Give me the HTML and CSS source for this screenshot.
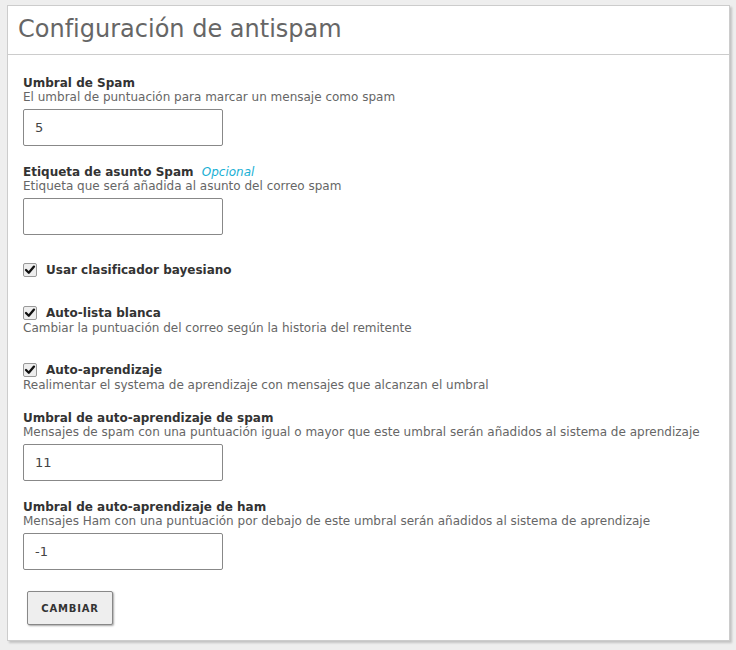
FILE: index.html
```html
<!DOCTYPE html>
<html lang="es">
  <head>
    <meta charset="UTF-8" />
    <meta name="viewport" content="width=device-width, initial-scale=1.0" />
    <title>Antispam</title>
    <link rel="stylesheet" href="styles.css">
  </head>
  <body>
    <div class="panel">
      <h1 class="panel-title">Configuración de antispam</h1>
      <form class="panel-body">
        <div class="field">
          <label class="field-label">Umbral de Spam</label>
          <div class="field-help">El umbral de puntuación para marcar un mensaje como spam</div>
          <input class="field-input" type="text" value="5">
        </div>
        <div class="field">
          <label class="field-label">Etiqueta de asunto Spam <span class="optional">Opcional</span></label>
          <div class="field-help">Etiqueta que será añadida al asunto del correo spam</div>
          <input class="field-input" type="text" value="">
        </div>
        <div class="field check-field">
          <label class="check-label"><span class="check"><svg viewBox="0 0 14 14" width="14" height="14"><path d="M3 7 L5.8 9.8 L11 3.6" fill="none" stroke="#111" stroke-width="2.3" stroke-linecap="round" stroke-linejoin="round"/></svg></span>Usar clasificador bayesiano</label>
        </div>
        <div class="field check-field">
          <label class="check-label"><span class="check"><svg viewBox="0 0 14 14" width="14" height="14"><path d="M3 7 L5.8 9.8 L11 3.6" fill="none" stroke="#111" stroke-width="2.3" stroke-linecap="round" stroke-linejoin="round"/></svg></span>Auto-lista blanca</label>
          <div class="field-help">Cambiar la puntuación del correo según la historia del remitente</div>
        </div>
        <div class="field check-field">
          <label class="check-label"><span class="check"><svg viewBox="0 0 14 14" width="14" height="14"><path d="M3 7 L5.8 9.8 L11 3.6" fill="none" stroke="#111" stroke-width="2.3" stroke-linecap="round" stroke-linejoin="round"/></svg></span>Auto-aprendizaje</label>
          <div class="field-help">Realimentar el systema de aprendizaje con mensajes que alcanzan el umbral</div>
        </div>
        <div class="field">
          <label class="field-label">Umbral de auto-aprendizaje de spam</label>
          <div class="field-help">Mensajes de spam con una puntuación igual o mayor que este umbral serán añadidos al sistema de aprendizaje</div>
          <input class="field-input" type="text" value="11">
        </div>
        <div class="field">
          <label class="field-label">Umbral de auto-aprendizaje de ham</label>
          <div class="field-help">Mensajes Ham con una puntuación por debajo de este umbral serán añadidos al sistema de aprendizaje</div>
          <input class="field-input" type="text" value="-1">
        </div>
        <button class="btn" type="button">CAMBIAR</button>
      </form>
    </div>
  </body>
</html>
```

FILE: styles.css
```css
body {
  font-family: "DejaVu Sans", Verdana, sans-serif;
  background-color: #eeeeee;
  margin: 0;
  padding: 5px 7px;
  color: #333;
  font-size: 12px;
}

.panel {
  background: #fff;
  border: 1px solid #cccccc;
  box-shadow: 2px 2px 2px rgba(0, 0, 0, 0.18);
  width: 721px;
  height: 634px;
  box-sizing: content-box;
}

.panel-title {
  margin: 0;
  padding: 10px 10px 11px;
  font-size: 24px;
  font-weight: normal;
  line-height: 27px;
  color: #666;
  border-bottom: 1px solid #cccccc;
}

.panel-body {
  padding: 21px 15px 0;
}

.field {
  margin-bottom: 19px;
}

.field-label {
  display: block;
  font-weight: bold;
  line-height: 14px;
  color: #333;
}

.optional {
  font-weight: normal;
  font-style: italic;
  color: #1ab0d4;
  margin-left: 4px;
}

.field-help {
  line-height: 14px;
  color: #666;
}

.field-input {
  display: block;
  margin-top: 5px;
  width: 200px;
  height: 37px;
  box-sizing: border-box;
  padding: 0 11px;
  border: 1px solid #888;
  border-radius: 2px;
  font-family: "DejaVu Sans", Verdana, sans-serif;
  font-size: 13px;
  color: #444;
}

.check-field {
  padding-top: 9px;
}

.check-label {
  display: flex;
  align-items: flex-end;
  font-weight: bold;
  line-height: 15px;
  color: #333;
}

.check {
  display: inline-block;
  width: 14px;
  height: 14px;
  margin: 0 9px 1px 0;
  border: 1px solid #999;
  border-radius: 2px;
  background: #eeeeee;
  box-sizing: border-box;
  position: relative;
}

.check svg {
  position: absolute;
  left: -1px;
  top: -1px;
}

.btn {
  margin: 2px 0 0 4px;
  width: 86px;
  height: 34px;
  background-color: #eeeeee;
  border: 1px solid #888;
  border-radius: 2px;
  box-shadow: 1px 1px 2px rgba(0, 0, 0, 0.35);
  font-family: "DejaVu Sans", Verdana, sans-serif;
  font-size: 10px;
  font-weight: bold;
  letter-spacing: 0.8px;
  color: #333;
  cursor: pointer;
}
```
